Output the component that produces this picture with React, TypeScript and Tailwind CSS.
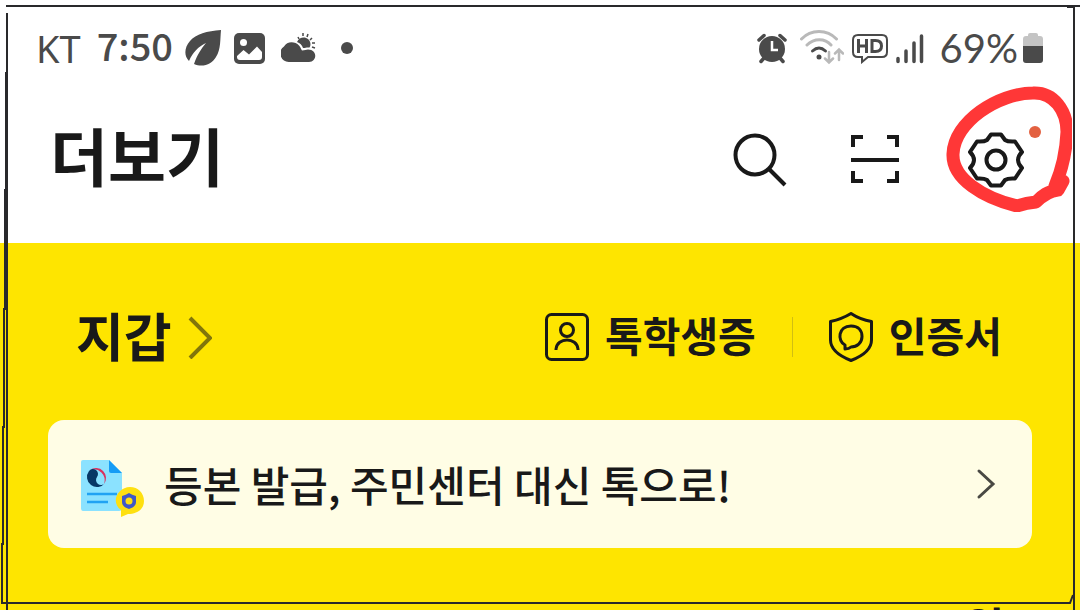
import React from "react";

function StatusBar() {
  return (
    <div className="flex h-24 shrink-0 items-center justify-between px-9 text-[#4a4a4a]">
      <div className="flex items-center">
        <span className="font-['Noto_Sans',sans-serif] text-[38px]">KT</span>
        <span className="ml-4 pb-2 font-['Noto_Sans_CJK_KR','Noto_Sans',sans-serif] text-[38px] font-medium">7:50</span>
        <svg className="ml-3 h-9 w-9" viewBox="0 0 36 36" fill="currentColor" aria-hidden="true">
          <path d="M36 0C22 1 11 4 5 11c-6 7-6 15-1 20C8 22 13 17 21 13 16 19 12 25 9 34c9 4 18 0 22-7C36 19 35 10 36 0Z" />
        </svg>
        <svg className="ml-3 h-8 w-8" viewBox="0 0 32 32" aria-hidden="true">
          <rect x="1" y="1" width="31" height="31" rx="5" fill="currentColor" />
          <circle cx="10.5" cy="10.5" r="3.5" fill="white" />
          <path d="M4 24l6.500-6L16 22.500 24 14.500l5 5.500v5q0 3-3 3H7q-3 0-3-3Z" fill="white" />
        </svg>
        <svg className="ml-4 h-8 w-9" viewBox="0 0 36 32" fill="currentColor" aria-hidden="true">
          <path d="M8 30a8.500 8.500 0 0 1-5-15.500C6 9 14 9 18 13.500c2 2 2 4 3 5 3 0 4-1 6-1 10 0 9 12.500 1 12.500Z" />
          <path d="M16 10c3-7 13-5.500 13.500 2q0 2-1 3.500c-3-.5-5 1-6.500.5-1-3-3-5-6-6Z" />
          <path d="M17 5l1 2M22 1v3M27 2l-1 3M31 6l-2 2M34 11h-3M34 16l-3-1" stroke="currentColor" strokeWidth="1.500" />
        </svg>
        <span className="ml-6 h-3 w-3 rounded-full bg-current" />
      </div>
      <div className="flex items-center">
        <svg className="h-8 w-8" viewBox="0 0 32 32" aria-hidden="true">
          <circle cx="16" cy="17" r="13" fill="currentColor" />
          <path d="M3 8l5-4.500M24 3.500L29 8M8 26l-3 3.500M24 26l3 3.500" stroke="currentColor" strokeWidth="3.500" strokeLinecap="round" />
          <path d="M16 9v9h6" fill="none" stroke="white" strokeWidth="2.500" />
        </svg>
        <svg className="ml-3 h-9 w-11" viewBox="0 0 44 36" fill="none" strokeLinecap="round" aria-hidden="true">
          <path d="M1.500 9C11-1 27-1 36.500 9M7 15C14 8 25 8 31 15" stroke="#b9b9b9" strokeWidth="3" />
          <path d="M12.500 21q6.500-6 13 0" stroke="currentColor" strokeWidth="3" />
          <circle cx="19" cy="27" r="2.500" fill="currentColor" />
          <path d="M29 22v10M25 28.500l4 4 4-4M39 30V20M35 23.500l4-4 4 4" stroke="#b9b9b9" strokeWidth="2.500" />
        </svg>
        <svg className="ml-2 h-8 w-9" viewBox="0 0 36 32" fill="none" stroke="currentColor" aria-hidden="true">
          <path d="M6 3h24q5 0 5 5v12q0 5-5 5H16l-6 5v-5H6q-5 0-5-5V8q0-5 5-5Z" strokeWidth="2" />
          <path d="M6.500 7v14M14.500 7v14M6.500 14h8M20 8.500h3.500q6 0 6 5.500t-6 5.500H20Z" strokeWidth="3" />
        </svg>
        <svg className="ml-2 h-8 w-7" viewBox="0 0 28 32" stroke="currentColor" strokeWidth="3.500" strokeLinecap="round" aria-hidden="true">
          <path d="M2 26.500v3M10 19v10.500M18 11v18.500M25.500 4v25.500" />
        </svg>
        <span className="ml-4 font-['Lato'] text-[40px]">69%</span>
        <svg className="ml-1 h-8 w-[22px]" viewBox="0 0 22 32" aria-hidden="true">
          <path d="M6 4V3q0-2 2-2h6q2 0 2 2v1h2q3 0 3 3v7H1V7q0-3 3-3Z" fill="#c4c4c4" />
          <path d="M1 14h20v14q0 3-3 3H4q-3 0-3-3Z" fill="currentColor" />
        </svg>
      </div>
    </div>
  );
}

function SettingsMark() {
  return (
    <svg className="pointer-events-none absolute -left-6 -top-12 h-32 w-32" viewBox="0 0 128 128" fill="none" aria-hidden="true">
      <path
        d="M73 122C40 114 8 95 9 70C10 38 54 9 89 9C110 8 123 27 123 48C122 70 117 88 111 102L119 97L114 106C104 107 98 112 92 118Q82 119 73 122"
        stroke="#ff3737"
        strokeWidth="13"
        strokeLinecap="round"
        strokeLinejoin="round"
      />
      <circle cx="91" cy="48" r="6" fill="#e36141" />
    </svg>
  );
}

function Header() {
  return (
    <header className="flex h-[147px] shrink-0 items-start justify-between pl-[50px] pr-14 pt-7">
      <h1 className="text-[63px] font-bold leading-[60px]">더보기</h1>
      <nav className="flex items-center pt-2">
        <button type="button" aria-label="검색" className="h-14 w-14">
          <svg className="h-14 w-14" viewBox="0 0 56 56" fill="none" stroke="currentColor" strokeWidth="4">
            <circle cx="23" cy="23" r="19.500" />
            <path d="M37 37l16 16" />
          </svg>
        </button>
        <button type="button" aria-label="스캔" className="ml-[62px] h-14 w-14">
          <svg className="h-14 w-14" viewBox="0 0 56 56" fill="none" stroke="currentColor" strokeWidth="4">
            <path d="M3 15V5h10M37 5h10v10M3 39v10h10M37 49h10V39M1 28h48" />
          </svg>
        </button>
        <div className="relative ml-[62px] h-14 w-14">
          <button type="button" aria-label="설정" className="h-14 w-14">
            <svg className="h-14 w-14" viewBox="0 0 56 56" fill="none" stroke="currentColor" strokeWidth="4" strokeLinejoin="round">
              <path d="M23 2.500H33L37 8Q40 10 47 9.500L54 20Q50 24 50 28Q50 32 54 36L47 46.500Q40 46 37 48L33 53.500H23L19 48Q16 46 9 46.500L2 36Q6 32 6 28Q6 24 2 20L9 9.500Q16 10 19 8Z" />
              <circle cx="28" cy="28" r="9.500" />
            </svg>
          </button>
          <SettingsMark />
        </div>
      </nav>
    </header>
  );
}

function Wallet() {
  return (
    <section className="flex-1 bg-[#fee500] px-12 pt-[54px]">
      <div className="flex h-20 items-center justify-between pl-7 pr-[30px]">
        <a href="#wallet" className="flex items-center">
          <h2 className="pb-1 text-[52px] font-bold leading-[76px]">지갑</h2>
          <svg className="ml-4 h-11 w-6" viewBox="0 0 24 44" fill="none" stroke="#81750b" strokeWidth="4" aria-hidden="true">
            <path d="M2 3l20 20L2 43" />
          </svg>
        </a>
        <div className="flex items-center">
          <a href="#student" className="flex items-center">
            <svg className="h-12 w-11" viewBox="0 0 44 48" fill="none" stroke="currentColor" strokeWidth="3" aria-hidden="true">
              <rect x="1.500" y="1.500" width="41" height="45" rx="5" />
              <circle cx="22" cy="17" r="6.500" />
              <path d="M11 37v-1c1-12 21-12 22 0v1" />
            </svg>
            <span className="ml-4 pb-1.5 text-[41px] font-bold leading-[74px]">톡학생증</span>
          </a>
          <span className="ml-9 h-10 w-px bg-[#d1be12]" />
          <a href="#certificate" className="ml-9 flex items-center">
            <svg className="h-[50px] w-11" viewBox="0 0 44 50" fill="none" stroke="currentColor" strokeWidth="3" strokeLinejoin="round" aria-hidden="true">
              <path d="M22 1.500q9 6 20.500 8V28c0 10-9 16-20.500 20.500C10.500 44 1.500 38 1.500 28V9.500Q13 7 22 1.500Z" />
              <path d="M16 37v-4C8 29 9 14 22 14c8 0 11 5 11 10.500C33 31 28 35 22 35q-2 2-6 2Z" />
            </svg>
            <span className="ml-4 pb-1.5 text-[41px] font-bold leading-[74px]">인증서</span>
          </a>
        </div>
      </div>
      <a href="#issue" className="mt-[43px] flex h-32 items-center rounded-2xl bg-[#fffde5] pl-8 pr-9">
        <svg className="h-16 w-16 shrink-0 overflow-visible" viewBox="0 -4 64 64" aria-hidden="true">
          <path d="M3 4h26l13 13v35q0 3-3 3H3q-2 0-2-3V6q0-2 2-2Z" fill="#8be2ff" />
          <path d="M29 4l13 13H31q-2 0-2-2Z" fill="#169cf5" />
          <path d="M7 38h30M7 46h21" stroke="#21a3f3" strokeWidth="2.500" />
          <path d="M10 14A10 10 0 0 1 24 28A11 11 0 0 0 10 14Z" fill="#da315d" />
          <path d="M9 15A10 10 0 0 0 25 27A5 5 0 0 1 17 21A5 5 0 0 0 9 15Z" fill="#073765" />
          <path d="M41 61v-7c-11-8-3-23 9-23 8 0 14 6 14 14 0 9-8 13-16 13Z" fill="#fee010" />
          <path d="M49 37q3 2 7 3v6c0 4-4 6-7 7-3-1-7-3-7-7v-6q4-1 7-3Z" fill="#4058c7" />
          <circle cx="49" cy="45" r="3.500" fill="#fee010" />
        </svg>
        <span className="ml-5 text-[42px] font-medium leading-[64px]">등본 발급, 주민센터 대신 톡으로!</span>
        <svg className="ml-auto h-8 w-5" viewBox="0 0 20 32" fill="none" stroke="#494943" strokeWidth="3" strokeLinecap="round" aria-hidden="true">
          <path d="M3 3l14 13L3 29" />
        </svg>
      </a>
      <div className="mt-[54px] flex items-start justify-end gap-34 pr-7">
        <svg className="mt-1.5 h-8 w-8" viewBox="0 0 32 32" fill="none" stroke="currentColor" strokeWidth="3" aria-hidden="true">
          <circle cx="16" cy="17" r="13" />
        </svg>
        <span className="text-[44px] font-bold leading-[48px]">원</span>
      </div>
    </section>
  );
}

function HandDrawnFrame() {
  return (
    <svg className="pointer-events-none absolute inset-0 h-full w-full" viewBox="0 0 1080 610" preserveAspectRatio="none" fill="none" stroke="#29292b" strokeWidth="2" aria-hidden="true">
      <path d="M6 6H1080M7 13V610M6 72V190H5V309H4V427H3V544H2V603H1070L1073 595M1067 7H1075M1074 7V610" />
    </svg>
  );
}

export default function App() {
  return (
    <main className="relative flex h-screen flex-col overflow-hidden bg-white font-['Noto_Sans_CJK_KR',sans-serif] text-[#191919]">
      <StatusBar />
      <Header />
      <Wallet />
      <HandDrawnFrame />
    </main>
  );
}
